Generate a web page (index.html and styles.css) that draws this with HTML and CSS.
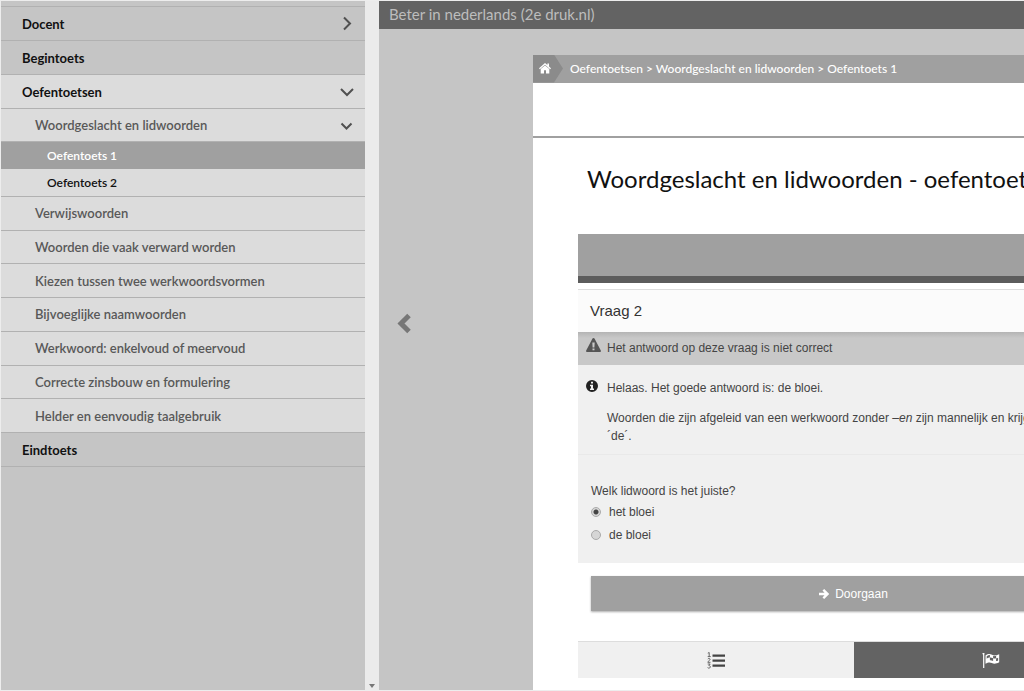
FILE: index.html
```html
<!DOCTYPE html>
<html lang="nl">
<head>
<meta charset="utf-8">
<title>Beter in nederlands</title>
<link rel="stylesheet" href="styles.css">
</head>
<body>
<div class="app">
  <nav class="sidebar" aria-label="Inhoud">
    <ul class="menu">
      <li class="spacer"></li>
      <li><a class="item" href="#">Docent <svg class="chev" viewBox="0 0 16 16"><path d="M5 1.500l6 6-6 6"/></svg></a></li>
      <li><a class="item" href="#">Begintoets</a></li>
      <li class="open">
        <a class="item" href="#">Oefentoetsen <svg class="chev" viewBox="0 0 16 16"><path d="M2 5l6 6 6-6"/></svg></a>
        <a class="item sub short" href="#">Woordgeslacht en lidwoorden <svg class="chev" viewBox="0 0 16 16"><path d="M2.500 6.500l5 5 5-5"/></svg></a>
        <ul class="leaves">
          <li><a class="leaf active" href="#" aria-current="page">Oefentoets 1</a></li>
          <li><a class="leaf" href="#">Oefentoets 2</a></li>
        </ul>
        <ul class="chapters">
          <li><a class="item sub" href="#">Verwijswoorden</a></li>
          <li><a class="item sub" href="#">Woorden die vaak verward worden</a></li>
          <li><a class="item sub" href="#">Kiezen tussen twee werkwoordsvormen</a></li>
          <li><a class="item sub" href="#">Bijvoeglijke naamwoorden</a></li>
          <li><a class="item sub" href="#">Werkwoord: enkelvoud of meervoud</a></li>
          <li><a class="item sub" href="#">Correcte zinsbouw en formulering</a></li>
          <li><a class="item sub" href="#">Helder en eenvoudig taalgebruik</a></li>
        </ul>
      </li>
      <li><a class="item" href="#">Eindtoets</a></li>
    </ul>
  </nav>
  <div class="track"><svg viewBox="0 0 6 4"><path d="M0 0h6L3 4z"/></svg></div>
  <div class="main">
    <header class="topbar">Beter in nederlands (2e druk.nl)</header>
    <div class="stage">
      <div class="gutter">
        <button class="prev" type="button" aria-label="Vorige"><svg viewBox="0 0 14 21"><path d="M12 2.500L4 10.500l8 8"/></svg></button>
      </div>
      <main class="page">
        <nav class="crumbs" aria-label="Kruimelpad">
          <a class="home" href="#" aria-label="Home"><svg viewBox="0 0 12 11"><path d="M6 0L0 5.300l.8.900L6 1.800l5.200 4.400.8-.9-2-1.800V.6H8.400v1.500zM6 2.500L1.700 6.100V10.500H5V7.300h2v3.200h3.300V6.100z"/></svg></a>
          <span><a href="#">Oefentoetsen</a> &gt; <a href="#">Woordgeslacht en lidwoorden</a> &gt; <a href="#">Oefentoets 1</a></span>
        </nav>
        <div class="tools"></div>
        <div class="content">
          <h1>Woordgeslacht en lidwoorden - oefentoets 1</h1>
          <div class="progress"></div>
          <section class="question">
            <h2>Vraag 2</h2>
            <div class="alert">
              <svg class="warn" viewBox="0 0 15 14"><path fill-rule="evenodd" d="M7.500 0c.5 0 .8.2 1 .6l6.300 11.800c.4.700-.1 1.600-1 1.600H1.200c-.9 0-1.400-.9-1-1.600L6.500.6c.2-.4.500-.6 1-.6zM6.300 4.500l.3 5h1.800l.3-5zM6.500 10.500v1.800h2v-1.800z"/></svg>
              <p>Het antwoord op deze vraag is niet correct</p>
            </div>
            <div class="feedback">
              <svg class="info" viewBox="0 0 12 12"><path fill-rule="evenodd" d="M6 0a6 6 0 1 0 0 12A6 6 0 0 0 6 0zM5 1.800h2v1.700H5zM4 4.700h3v3.800h1V10H4V8.500h1V6.200H4z"/></svg>
              <div>
                <p>Helaas. Het goede antwoord is: de bloei.</p>
                <p>Woorden die zijn afgeleid van een werkwoord zonder <em>–en</em> zijn mannelijk en krijgen<br>´de´.</p>
              </div>
            </div>
            <fieldset class="answers">
              <legend>Welk lidwoord is het juiste?</legend>
              <label><input type="radio" name="a" checked> het bloei</label>
              <label><input type="radio" name="a"> de bloei</label>
            </fieldset>
          </section>
          <button class="next" type="button"><svg viewBox="0 0 10 10"><path d="M5.200 0L10.200 5 5.200 10 3.500 8.400l2-2.100H0V3.700h5.500l-2-2.100z"/></svg> Doorgaan</button>
          <div class="tabs">
            <button class="tab" type="button" aria-label="Vragen"><svg viewBox="0 0 18 17"><path d="M5.500 2.500H18v2.300H5.500zM5.500 7.500H18v2.300H5.500zM5.500 12.500H18v2.300H5.500z"/><path class="digits" d="M.8 1.200L2.200.5V4.500M.7 4.600h3M.7 7.200c.4-1 2.400-1 2.400.2 0 1-2.300 1.600-2.300 2.900h2.700M.7 12h2.500l-1.400 1.500c2 0 2 2.600.2 2.600-.6 0-1-.1-1.400-.5"/></svg></button>
            <button class="tab dark" type="button" aria-label="Afronden"><svg viewBox="0 0 17 15"><path fill-rule="evenodd" d="M.2 1.200a1 1 0 1 1 1.600 0V15H.6V1.800zM3 2.500C5.500.7 7.500.8 9.500 1.800c2 1 4 .7 7.200-.6v8c-3 1.600-5.200 1.900-7.400.8C7.500 9 5.500 9.200 3 10.800zM4.200 3.300v2.400c1.300-.8 2.200-1 3.200-1.100V2.100c-1.200 0-2 .4-3.200 1.200zM7.400 4.600v2.700c1.300-.1 2 .2 3.200.7V5.300c-1.200-.5-2-.8-3.200-.7zM10.600 3.100v2.200c1.300.3 2 .3 3 0V2.800c-1 .3-2 .5-3 .3zM13.600 5.300v2.800c.8-.2 1.200-.3 2-.7V4.700c-.8.3-1.200.5-2 .6z"/></svg></button>
          </div>
        </div>
      </main>
    </div>
  </div>
</div>
</body>
</html>
```
FILE: styles.css
```css
* { box-sizing: border-box; }
body { margin: 0; background: #ededed; font-family: "Liberation Sans", Arial, sans-serif; font-size: 12px; color: #444; }
a { color: inherit; text-decoration: none; }
ul { list-style: none; margin: 0; padding: 0; }
button { border: 0; font: inherit; cursor: pointer; }
svg { display: block; flex: none; }

.app { display: flex; height: 100vh; overflow: hidden; padding: 1px 0 1px 1px; }

.sidebar { flex: 0 0 364px; background: #c5c5c5; overflow: hidden; font-family: Lato, sans-serif; font-weight: 700; font-size: 13px; color: #111; }
.spacer { height: 6px; border-bottom: 1px solid #b1b1b1; }
.item { display: flex; align-items: center; justify-content: space-between; height: 34px; padding: 0 10px 0 21px; border-bottom: 1px solid #b1b1b1; }
.open { background: #dcdcdc; }
.sub { padding-left: 34px; color: #585858; font-weight: 600; }
.short { height: 33px; }
.chev { width: 16px; height: 16px; fill: none; stroke: #505050; stroke-width: 2; }
.leaves { border-bottom: 1px solid #b1b1b1; font-size: 12px; font-weight: 600; }
.leaf { display: block; height: 27px; line-height: 27px; padding-left: 46px; }
.active { background: #a0a0a0; color: #fff; }
.chapters { display: grid; grid-auto-rows: 1fr; height: 236px; }
.chapters .item { height: 100%; }

.track { flex: 0 0 14px; background: #ebebeb; display: flex; align-items: flex-end; justify-content: center; padding-bottom: 2px; }
.track svg { width: 6px; height: 4px; fill: #777; }

.main { flex: 1; min-width: 0; display: flex; flex-direction: column; background: #c5c5c5; }
.topbar { height: 28px; line-height: 27px; padding-left: 10px; background: #636363; color: #bdbdbd; font-family: Lato, sans-serif; font-size: 15px; }
.stage { flex: 1; min-height: 0; display: flex; padding-top: 26px; overflow: hidden; }
.gutter { flex: 0 0 154px; display: flex; align-items: center; padding: 0 0 99px 18px; }
.prev { padding: 0; background: none; }
.prev svg { width: 14px; height: 21px; fill: none; stroke: #777; stroke-width: 5; }

.page { flex: 1 0 641px; background: #fff; }
.crumbs { display: flex; align-items: center; gap: 7px; height: 28px; padding-bottom: 1px; background: #a0a0a0; color: #fff; font-family: Lato, sans-serif; font-weight: 500; font-size: 12px; }
.home { display: flex; align-items: center; width: 30px; height: 28px; padding-left: 6px; background: #8b8b8b; clip-path: polygon(0 0, 21px 0, 100% 50%, 21px 100%, 0 100%); }
.home svg { width: 12px; height: 11px; fill: #fff; }
.tools { height: 55px; border-bottom: 2px solid #a0a0a0; }
.content { padding: 0 45px; }
h1 { margin: 0; padding: 25px 0 39px 9px; line-height: 32px; font-family: Lato, sans-serif; font-weight: 400; font-size: 24px; color: #111; white-space: nowrap; }
.progress { height: 49px; background: #a0a0a0; border-bottom: 7px solid #5c5c5c; }
.question { margin-top: 6px; background: #f0f0f0; border-top: 1px solid #ddd; }
h2 { margin: 0; padding-left: 12px; height: 42px; line-height: 41px; background: #fbfbfb; font-weight: 400; font-size: 15px; color: #333; }
.alert { display: flex; gap: 6px; height: 33px; padding: 6px 8px; background: linear-gradient(#b4b4b4, #c8c8c8 6px); }
.alert p { margin: 0; line-height: 20px; }
.warn { width: 15px; height: 14px; fill: #555; }
.feedback { display: flex; gap: 9px; height: 90px; padding: 14px 0 0 8px; border-bottom: 1px solid #e9e9e9; white-space: nowrap; }
.feedback p { margin: 0 0 12px; line-height: 18px; }
.info { width: 12px; height: 12px; margin-top: 1px; fill: #222; }
.answers { margin: 0; border: 0; padding: 28px 13px 17px; }
.answers legend { float: left; width: 100%; padding: 0; line-height: 17px; }
.answers label { display: flex; align-items: center; gap: 8px; clear: both; height: 23px; }
.answers input { appearance: none; width: 10px; height: 10px; margin: 0; border: 1px solid #aaa; border-radius: 50%; background: #d6d6d6; }
.answers input:checked { background: radial-gradient(#444 2px, #d6d6d6 3px); }
.next { display: flex; align-items: center; justify-content: center; gap: 6px; width: calc(100% - 26px); height: 35px; margin: 13px 13px 30px; background: #a0a0a0; color: #fff; box-shadow: 0 1px 2px #aaa; }
.next svg { width: 10px; height: 10px; fill: #fff; }
.tabs { display: grid; grid-template-columns: 1fr 1fr; height: 37px; border-top: 1px solid #ddd; }
.tab { display: flex; align-items: center; justify-content: center; padding: 0; background: #f0f0f0; }
.tab svg { width: 18px; height: 17px; fill: #444; }
.digits { fill: none; stroke: #666; stroke-width: 1; }
.dark { background: #636363; }
.tab.dark svg { height: 15px; fill: #fff; }
```
